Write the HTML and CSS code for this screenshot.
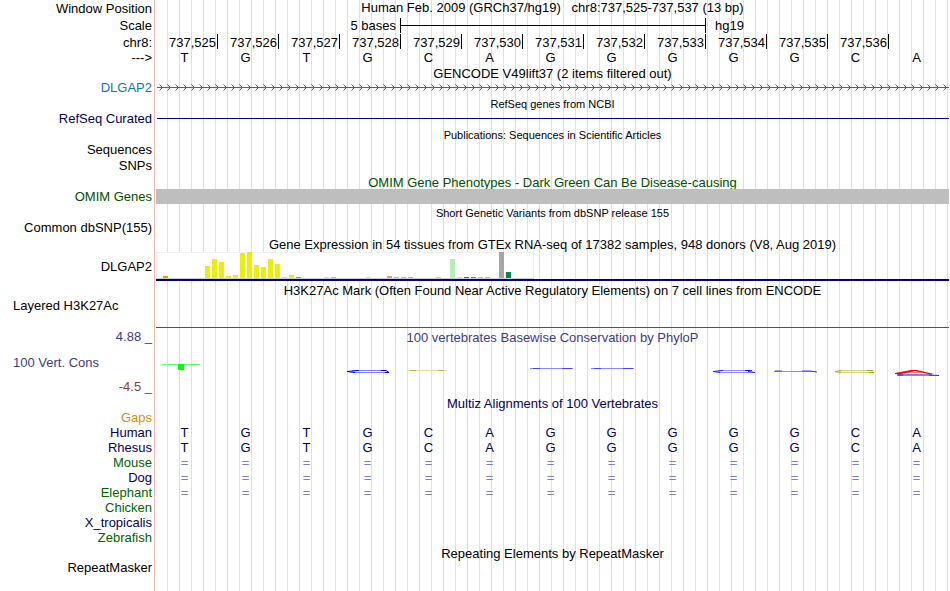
FILE: index.html
```html
<!DOCTYPE html>
<html lang="en">
<head>
    <meta charset="UTF-8">
    <meta name="viewport" content="width=device-width, initial-scale=1.0">
    <title>chr8:737,525-737,537</title>
    <link rel="stylesheet" href="styles.css">
</head>
<body>
    <main class="browser">
        <!-- Ruler -->
        <div class="row row-position">
            <div class="label">Window Position</div>
            <h1 class="title">Human Feb. 2009 (GRCh37/hg19)&nbsp;&nbsp; chr8:737,525-737,537 (13 bp)</h1>
        </div>
        <div class="row row-scale">
            <div class="label">Scale</div>
            <div class="bases scale">
                <span class="scale-size">5 bases</span>
                <span class="scale-bar"></span>
                <span class="scale-db">hg19</span>
            </div>
        </div>
        <div class="row row-ticks">
            <div class="label">chr8:</div>
            <div class="bases ticks">
                <span>737,525</span><span>737,526</span><span>737,527</span><span>737,528</span><span>737,529</span><span>737,530</span><span>737,531</span><span>737,532</span><span>737,533</span><span>737,534</span><span>737,535</span><span>737,536</span><span></span>
            </div>
        </div>
        <div class="row">
            <div class="label">---&gt;</div>
            <div class="bases">
                <span>T</span><span>G</span><span>T</span><span>G</span><span>C</span><span>A</span><span>G</span><span>G</span><span>G</span><span>G</span><span>G</span><span>C</span><span>A</span>
            </div>
        </div>

        <!-- Genes -->
        <div class="row">
            <h2 class="title">GENCODE V49lift37 (2 items filtered out)</h2>
        </div>
        <div class="row gencode">
            <div class="label">DLGAP2</div>
            <svg class="intron" width="100%" height="15">
                <defs>
                    <pattern id="arrows" x="3" y="0" width="8" height="15" patternUnits="userSpaceOnUse">
                        <path d="M0.5 4.5 L3.5 7.5 L0.5 10.5" fill="none" stroke="#0c78b4"/>
                    </pattern>
                </defs>
                <rect x="1" y="7" width="100%" height="1" fill="#0c78b4"/>
                <rect x="1" y="0" width="100%" height="15" fill="url(#arrows)"/>
            </svg>
        </div>
        <div class="row row-tall">
            <h2 class="title small">RefSeq genes from NCBI</h2>
        </div>
        <div class="row navy">
            <div class="label">RefSeq Curated</div>
            <div class="gene-line"></div>
        </div>
        <div class="row row-tall">
            <h2 class="title small">Publications: Sequences in Scientific Articles</h2>
        </div>
        <div class="row">
            <div class="label">Sequences</div>
        </div>
        <div class="row row-tall">
            <div class="label">SNPs</div>
        </div>
        <div class="row row-tall omim">
            <h2 class="title">OMIM Gene Phenotypes - Dark Green Can Be Disease-causing</h2>
        </div>
        <div class="row omim">
            <div class="label">OMIM Genes</div>
            <div class="omim-bar"></div>
        </div>
        <div class="row row-tall">
            <h2 class="title small">Short Genetic Variants from dbSNP release 155</h2>
        </div>
        <div class="row">
            <div class="label">Common dbSNP(155)</div>
        </div>

        <!-- Expression -->
        <div class="row row-head">
            <h2 class="title">Gene Expression in 54 tissues from GTEx RNA-seq of 17382 samples, 948 donors (V8, Aug 2019)</h2>
        </div>
        <div class="row row-gtex">
            <div class="label">DLGAP2</div>
            <div class="gtex">
                <svg width="378" height="27">
                    <rect x="0.5" y="0.5" width="377" height="27" fill="#fff" stroke="#f0f0f0"/>
                    <rect x="0" y="26" width="378" height="1" fill="#d0d0d0"/>
                    <rect x="7" y="24" width="5" height="2" fill="#ee9a00"/>
                    <g fill="#eeee00">
                        <rect x="49" y="14" width="5" height="12"/>
                        <rect x="56" y="7" width="5" height="19"/>
                        <rect x="63" y="10" width="5" height="16"/>
                        <rect x="70" y="24" width="5" height="2"/>
                        <rect x="77" y="23" width="5" height="3"/>
                        <rect x="84" y="1" width="5" height="25"/>
                        <rect x="91" y="0" width="5" height="26"/>
                        <rect x="98" y="13" width="5" height="13"/>
                        <rect x="105" y="15" width="5" height="11"/>
                        <rect x="112" y="7" width="5" height="19"/>
                        <rect x="119" y="12" width="5" height="14"/>
                        <rect x="126" y="25" width="5" height="1"/>
                        <rect x="133" y="23" width="5" height="3"/>
                    </g>
                    <rect x="140" y="25" width="5" height="1" fill="#00cdcd"/>
                    <rect x="168" y="25" width="5" height="1" fill="#eed5d2"/>
                    <rect x="175" y="25" width="5" height="1" fill="#cdb79e"/>
                    <rect x="210" y="25" width="5" height="1" fill="#eed5d2"/>
                    <rect x="231" y="24" width="5" height="2" fill="#cdaa7d"/>
                    <rect x="238" y="25" width="5" height="1" fill="#cdb79e"/>
                    <rect x="245" y="25" width="5" height="1" fill="#cdb79e"/>
                    <rect x="252" y="25" width="5" height="1" fill="#9acd32"/>
                    <rect x="280" y="25" width="5" height="1" fill="#ffb6c1"/>
                    <rect x="294" y="7" width="5" height="19" fill="#b4eeb4"/>
                    <rect x="301" y="25" width="5" height="1" fill="#d9d9d9"/>
                    <rect x="308" y="25" width="5" height="1" fill="#3a5fcd"/>
                    <rect x="315" y="25" width="5" height="1" fill="#1e90ff"/>
                    <rect x="322" y="25" width="5" height="1" fill="#cdb79e"/>
                    <rect x="329" y="25" width="5" height="1" fill="#cdb79e"/>
                    <rect x="343" y="0" width="5" height="26" fill="#a6a6a6"/>
                    <rect x="350" y="20" width="5" height="6" fill="#008b45"/>
                </svg>
            </div>
        </div>

        <!-- Regulation -->
        <div class="row row-head">
            <h2 class="title">H3K27Ac Mark (Often Found Near Active Regulatory Elements) on 7 cell lines from ENCODE</h2>
        </div>
        <div class="row row-h3k">
            <div class="label label-left">Layered H3K27Ac</div>
            <div class="signal"></div>
        </div>

        <!-- Conservation -->
        <div class="row row-head cons">
            <div class="label">4.88 _</div>
            <h2 class="title">100 vertebrates Basewise Conservation by PhyloP</h2>
        </div>
        <div class="row row-phylop cons">
            <div class="label label-left">100 Vert. Cons</div>
            <div class="bases logos">
                <svg viewBox="0 0 61 34">
                    <rect x="6" y="19" width="38" height="1" fill="#66ff66"/>
                    <rect x="22" y="19" width="6" height="6" fill="#00ff00"/>
                </svg>
                <svg viewBox="0 0 61 34"></svg>
                <svg viewBox="0 0 61 34"></svg>
                <svg viewBox="0 0 61 34">
                    <path d="M13 25.5 H46 M14 27.5 H50" stroke="#8080ff" fill="none"/>
                    <path d="M20 25.5 L8 26.5 L16 27.5 M42 25.5 H47 L50 27.5 H46" stroke="#0000ff" fill="none"/>
                </svg>
                <svg viewBox="0 0 61 34">
                    <path d="M8 25.5 H47" stroke="#dede99"/>
                    <path d="M10 25.5 H16 M38 25.5 H44" stroke="#baba30"/>
                </svg>
                <svg viewBox="0 0 61 34"></svg>
                <svg viewBox="0 0 61 34">
                    <path d="M8 23.5 H51" stroke="#8888ff"/>
                    <path d="M11 23.5 H18 M40 23.5 H50" stroke="#4444ff"/>
                </svg>
                <svg viewBox="0 0 61 34">
                    <path d="M8 23.5 H51" stroke="#8888ff"/>
                    <path d="M11 23.5 H18 M40 23.5 H50" stroke="#4444ff"/>
                </svg>
                <svg viewBox="0 0 61 34"></svg>
                <svg viewBox="0 0 61 34">
                    <path d="M13 25.5 H46 M14 27.5 H50" stroke="#9090ff" fill="none"/>
                    <path d="M18 25.5 L8 26.5 L15 27.5 M40 25.5 H47 M43 26.5 L50 27.5" stroke="#2020ff" fill="none"/>
                </svg>
                <svg viewBox="0 0 61 34">
                    <path d="M8 26.5 H50" stroke="#8888ff" fill="none"/>
                    <path d="M9 26 H16 M36 26 H44 L51 27" stroke="#3a3aff" fill="none"/>
                </svg>
                <svg viewBox="0 0 61 34">
                    <path d="M12 25.5 H46 M12 27.5 H47" stroke="#d2d27a" fill="none"/>
                    <path d="M15 25.5 L8 26.5 L14 27.5 M40 25.5 H46 M42 27.5 H47" stroke="#aaaa10" fill="none"/>
                </svg>
                <svg viewBox="0 0 61 34">
                    <path d="M9 29.5 H44 M10 30.5 H46" stroke="#8080ff" fill="none"/>
                    <path d="M9 30 H15 M41 30 L51 30.5" stroke="#2020ff" fill="none"/>
                    <path d="M20 27.5 H34" stroke="#ff8080" fill="none"/>
                    <path d="M7 28 L23 25 H29 L46 29 H40 L27 26 L13 29 H7 Z" fill="#ff0000"/>
                </svg>
            </div>
        </div>
        <div class="row row-tall cons-low">
            <div class="label">-4.5 _</div>
        </div>
        <div class="row navy">
            <h2 class="title">Multiz Alignments of 100 Vertebrates</h2>
        </div>
        <div class="row gaps">
            <div class="label">Gaps</div>
        </div>
        <div class="row navy">
            <div class="label">Human</div>
            <div class="bases">
                <span>T</span><span>G</span><span>T</span><span>G</span><span>C</span><span>A</span><span>G</span><span>G</span><span>G</span><span>G</span><span>G</span><span>C</span><span>A</span>
            </div>
        </div>
        <div class="row navy">
            <div class="label">Rhesus</div>
            <div class="bases">
                <span>T</span><span>G</span><span>T</span><span>G</span><span>C</span><span>A</span><span>G</span><span>G</span><span>G</span><span>G</span><span>G</span><span>C</span><span>A</span>
            </div>
        </div>
        <div class="row green">
            <div class="label">Mouse</div>
            <div class="bases unaligned">
                <span>=</span><span>=</span><span>=</span><span>=</span><span>=</span><span>=</span><span>=</span><span>=</span><span>=</span><span>=</span><span>=</span><span>=</span><span>=</span>
            </div>
        </div>
        <div class="row navy">
            <div class="label">Dog</div>
            <div class="bases unaligned">
                <span>=</span><span>=</span><span>=</span><span>=</span><span>=</span><span>=</span><span>=</span><span>=</span><span>=</span><span>=</span><span>=</span><span>=</span><span>=</span>
            </div>
        </div>
        <div class="row green">
            <div class="label">Elephant</div>
            <div class="bases unaligned">
                <span>=</span><span>=</span><span>=</span><span>=</span><span>=</span><span>=</span><span>=</span><span>=</span><span>=</span><span>=</span><span>=</span><span>=</span><span>=</span>
            </div>
        </div>
        <div class="row green">
            <div class="label">Chicken</div>
        </div>
        <div class="row navy">
            <div class="label">X_tropicalis</div>
        </div>
        <div class="row green">
            <div class="label">Zebrafish</div>
        </div>

        <!-- Repeats -->
        <div class="row">
            <h2 class="title">Repeating Elements by RepeatMasker</h2>
        </div>
        <div class="row">
            <div class="label">RepeatMasker</div>
        </div>
    </main>
</body>
</html>
```

FILE: styles.css
```css
* {
    box-sizing: border-box;
    margin: 0;
    padding: 0;
}

body {
    background-color: #fff;
    color: #000;
    font-family: "Liberation Sans", Arial, sans-serif;
    font-size: 13px;
    line-height: 15px;
}

/* red divider next to the labels, then a guide line every 12px */
.browser {
    min-height: 100vh;
    padding-right: 1px;
    background-image:
        linear-gradient(#ffb4b4, #ffb4b4),
        repeating-linear-gradient(to right, transparent 0 11px, #dcdcff 11px 12px);
    background-size: 1px 100%, 100% 100%;
    background-position: 154px 0, 156px 0;
    background-repeat: no-repeat;
}

.row {
    display: grid;
    grid-template-columns: 152px minmax(0, 1fr);
    column-gap: 4px;
    min-height: 15px;
}

.row-position,
.row-ticks,
.row-tall {
    min-height: 16px;
}

.row-scale {
    min-height: 18px;
}

.row-head {
    min-height: 17px;
}

.row-gtex {
    min-height: 29px;
}

.row-h3k {
    min-height: 30px;
}

.row-phylop {
    min-height: 34px;
}

.label {
    grid-column: 1;
    align-self: center;
    text-align: right;
    white-space: nowrap;
}

.label-left {
    padding-left: 13px;
    text-align: left;
}

.row-h3k .label,
.cons-low .label {
    align-self: start;
}

/* titles sit close to the track they belong to */
.title {
    grid-column: 2;
    align-self: end;
    margin-bottom: -1px;
    font-size: 13px;
    font-weight: normal;
    text-align: center;
    white-space: nowrap;
}

.row-head .title {
    margin-bottom: 0;
}

.row-position .title {
    align-self: start;
    margin-bottom: 0;
}

.small {
    font-size: 11px;
}

.bases {
    display: grid;
    grid-template-columns: repeat(13, minmax(0, 1fr));
    text-align: center;
}

.bases span {
    padding-right: 4px;
}

/* scale and coordinates */
.scale {
    align-items: center;
}

.scale .scale-size {
    grid-column: span 4;
    text-align: right;
}

.scale .scale-bar {
    grid-column: span 5;
    height: 15px;
    margin-right: -1px;
    padding: 0;
    border: solid #000;
    border-width: 0 1px;
    background: linear-gradient(#000, #000) center / 100% 1px no-repeat;
}

.scale .scale-db {
    grid-column: span 4;
    padding-left: 10px;
    text-align: left;
}

.ticks span {
    height: 15px;
    padding-right: 1px;
    line-height: 17px;
    text-align: right;
}

.ticks span + span {
    border-left: 1px solid #000;
}

/* track items */
.intron {
    display: block;
}

.gene-line {
    align-self: center;
    height: 1px;
    margin-left: 1px;
    background-color: #000078;
}

.omim-bar {
    background-color: #bebebe;
}

.gtex {
    border-bottom: 2px solid #000078;
}

.gtex svg {
    display: block;
}

.signal {
    border-bottom: 1px solid #3c5a64;
}

.logos svg {
    display: block;
    width: 100%;
    height: 34px;
}

/* track colours */
.gencode {
    color: #0c78b4;
}

.navy {
    color: #000064;
}

.green {
    color: #006400;
}

.omim {
    color: #005000;
}

.gaps {
    color: #e68c00;
}

.cons {
    color: #3c3c8c;
}

.cons-low {
    color: #8c3c3c;
}

.unaligned {
    color: #8080b4;
}
```
